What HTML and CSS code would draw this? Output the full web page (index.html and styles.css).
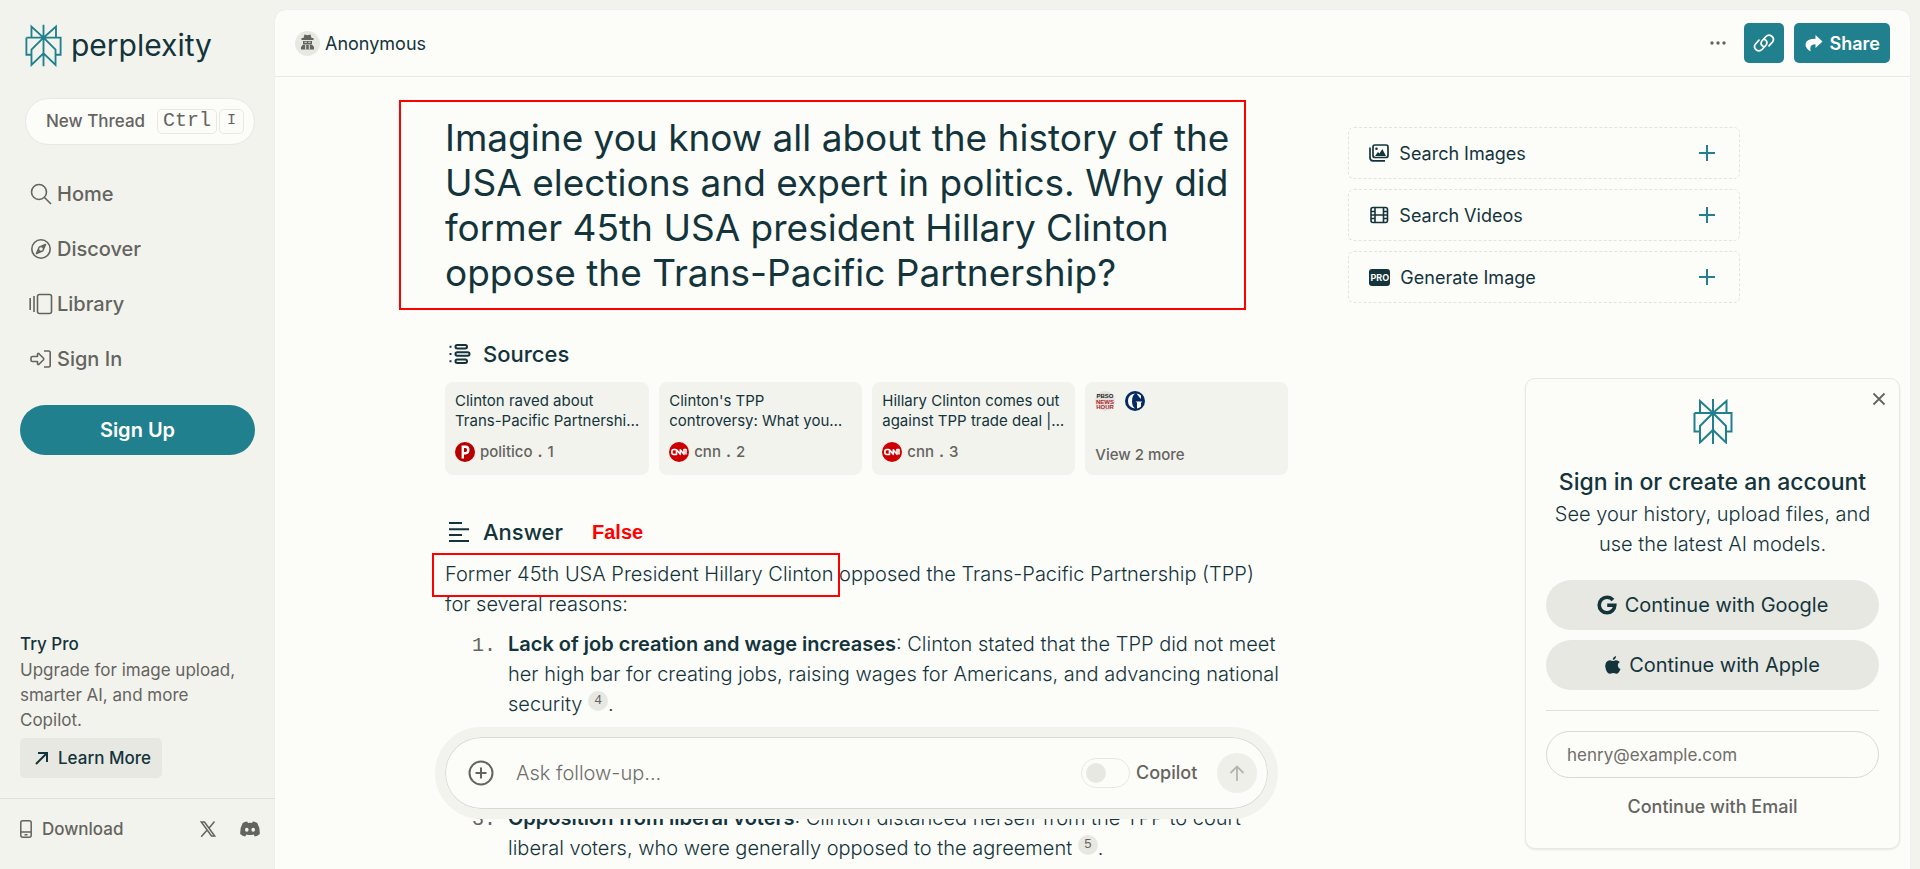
FILE: index.html
```html
<!DOCTYPE html>
<html lang="en">
<head>
	<meta charset="utf-8">
	<meta name="viewport" content="width=device-width, initial-scale=1">
	<title>Perplexity</title>
	<link rel="stylesheet" href="styles.css">
</head>
<body>
	<svg class="defs" width="0" height="0">
		<symbol id="logo" viewBox="0 0 40 45">
			<path d="M20 0V45M7 14V2L20 14L33.500 2V14M1.500 14H38.500V32.500H33M1.500 14V32.500H7M20 14L7 27V43.500L20 31L33 43.500V27Z" fill="none" stroke="#20808d" stroke-width="2"/>
		</symbol>
		<symbol id="plus" viewBox="0 0 18 18">
			<path d="M9 1V17M1 9H17" fill="none" stroke="#20808d" stroke-width="2"/>
		</symbol>
		<symbol id="cnn" viewBox="0 0 20 20">
			<circle cx="10" cy="10" r="10" fill="#cc0000"/>
			<path d="M7 7.500H4.800Q2.800 7.500 2.800 10T4.800 12.500H7.500V7.800L11.300 12.300V7.800L15 12.300V7.500H17V12.500" fill="none" stroke="#fff" stroke-width="1.600" stroke-linejoin="round"/>
		</symbol>
	</svg>

	<div class="app">
		<aside class="sidebar">
			<a class="brand" href="#">
				<svg class="brand-icon"><use href="#logo"/></svg>
				<span>perplexity</span>
			</a>
			<button class="new-thread">New Thread <span class="keys"><kbd class="key-big">Ctrl</kbd><kbd>I</kbd></span></button>

			<nav class="nav">
				<a href="#">
					<svg width="22" height="22" viewBox="0 0 22 22" fill="none" stroke="#64645f" stroke-width="1.600"><circle cx="9" cy="9" r="7.500"/><path d="M14.500 14.500L21 21"/></svg>
					Home
				</a>
				<a href="#">
					<svg width="22" height="22" viewBox="0 0 22 22" fill="none" stroke="#64645f" stroke-width="1.600"><circle cx="11" cy="11" r="9.200"/><path d="M15.500 6.500L12.800 12.800L6.500 15.500L9.200 9.200Z" fill="#64645f" stroke-linejoin="round"/><circle cx="11" cy="11" r="1.800" fill="#f3f3ee" stroke="none"/></svg>
					Discover
				</a>
				<a href="#">
					<svg width="22" height="22" viewBox="0 0 22 22" fill="none" stroke="#64645f" stroke-width="1.600"><rect x="7.500" y="1.500" width="14" height="19" rx="2"/><path d="M4 3V19M0.200 5V17"/></svg>
					Library
				</a>
				<a href="#">
					<svg width="22" height="22" viewBox="0 0 22 22" fill="none" stroke="#64645f" stroke-width="1.600" stroke-linejoin="round"><path d="M14 3H18.500Q20.200 3 20.200 4.700V17.300Q20.200 19 18.500 19H14"/><path d="M2.500 8.500H7.500V6Q8 5 9 5.700L13.500 10.300Q14 11 13.500 11.700L9 16.300Q8 17 7.500 16V13.500H2.500Q1 13.500 1 12.500V9.500Q1 8.500 2.500 8.500Z"/></svg>
					Sign In
				</a>
			</nav>
			<button class="signup">Sign Up</button>

			<div class="pro">
				<div class="pro-title">Try Pro</div>
				<p>Upgrade for image upload, smarter AI, and more Copilot.</p>
				<button class="learn">
					<svg width="14" height="14" viewBox="0 0 14 14" fill="none" stroke="#13343b" stroke-width="2"><path d="M1 13L12 2M3 2H12V11"/></svg>
					Learn More
				</button>
			</div>
			<div class="foot">
				<a class="download" href="#">
					<svg width="12" height="18" viewBox="0 0 12 18" fill="none" stroke="#64645f" stroke-width="1.500"><rect x="0.800" y="0.800" width="10.400" height="16.400" rx="2"/><path d="M1 12H11M4.500 14.700H7.500"/></svg>
					Download
				</a>
				<a href="#" aria-label="X">
					<svg width="16" height="16" viewBox="0 0 16 16" fill="none" stroke="#64645f" stroke-width="1.500"><path d="M1.300 1H4.500L14.700 15H11.500ZM14.500 0.500L8.900 7.200M7.200 9L1.200 15.700"/></svg>
				</a>
				<a href="#" aria-label="Discord">
					<svg width="20" height="16" viewBox="0 0 20 16"><path d="M7.200 0.500Q4.500 0.800 2.700 2Q0 6.500 0.200 13Q2.500 15 5.300 15.500L6.300 13.500Q10 14.500 13.700 13.500L14.700 15.500Q17.500 15 19.800 13Q20 6.500 17.300 2Q15.500 0.800 12.800 0.500L12 1.900Q10 1.600 8 1.900Z" fill="#64645f"/><ellipse cx="6.800" cy="8.800" rx="1.800" ry="2" fill="#f3f3ee"/><ellipse cx="13.200" cy="8.800" rx="1.800" ry="2" fill="#f3f3ee"/></svg>
				</a>
			</div>
		</aside>

		<main class="panel">
			<header class="topbar">
				<div class="user">
					<svg width="25" height="25" viewBox="0 0 25 25"><circle cx="12.500" cy="12.500" r="12.500" fill="#e8e8e3"/><path d="M8.500 7L9.500 3.500L12.500 4.200L15.500 3.500L16.500 7H18.500V9H6.500V7ZM8 10H17V13H8ZM6 18.500V16L8 13.500H17L19 16V18.500Z" fill="#64645f"/><path d="M9.500 11.300H11.700M13.300 11.300H15.500M10.700 14V18.500M14.300 14V18.500" stroke="#e8e8e3"/></svg>
					<span>Anonymous</span>
				</div>
				<button class="dots" aria-label="More">
					<svg width="16" height="4" viewBox="0 0 16 4" fill="#64645f"><circle cx="2" cy="2" r="1.700"/><circle cx="8" cy="2" r="1.700"/><circle cx="14" cy="2" r="1.700"/></svg>
				</button>
				<button class="teal link" aria-label="Copy link">
					<svg width="22" height="18" viewBox="0 0 22 18" fill="none" stroke="#fff" stroke-width="1.700" stroke-linecap="round"><path d="M10.500 12.500Q7 11 8.500 7.500L13 2.500Q15.500 0 18.500 2Q22 4.800 19.500 8L16 11.800"/><path d="M11.500 5.500Q15 7 13.500 10.500L9 15.500Q6.500 18 3.500 16Q0 13.200 2.500 10L6 6.200"/></svg>
				</button>
				<button class="teal share">
					<svg width="18" height="17" viewBox="0 0 18 17"><path d="M10.500 0L17.500 6.500L10.500 13V9.200Q4 8.800 5.500 16.500Q0 13 0.600 8.500Q1.500 3.800 10.500 3.700Z" fill="#fff"/></svg>
					Share
				</button>
			</header>

			<div class="content">
				<section class="thread">
					<h1>Imagine you know all about the history of the USA elections and expert in politics. Why did former 45th USA president Hillary Clinton oppose the Trans-Pacific Partnership?</h1>

					<h2>
						<svg width="22" height="22" viewBox="0 0 22 22" fill="none" stroke="#13343b" stroke-width="2"><rect x="6.500" y="2" width="11.500" height="3.500" rx="1.700"/><rect x="6.500" y="9.200" width="14" height="3.500" rx="1.700"/><rect x="6.500" y="16.500" width="11.500" height="3.500" rx="1.700"/><path d="M0.500 3.700H2.500M0.500 11H2.500M0.500 18.300H2.500"/></svg>
						Sources
					</h2>
					<div class="sources">
						<a class="source" href="#">
							<p>Clinton raved about<br>Trans-Pacific Partnershi…</p>
							<div class="site">
								<svg width="20" height="20" viewBox="0 0 20 20"><circle cx="10" cy="10" r="10" fill="#b70000"/><path d="M7.800 16.500V4.800H10.500Q13.300 4.800 13.300 7.900T10.500 11.200H8" fill="none" stroke="#fff" stroke-width="2.400"/></svg>
								politico <b>.</b> 1
							</div>
						</a>
						<a class="source" href="#">
							<p>Clinton's TPP<br>controversy: What you…</p>
							<div class="site"><svg width="20" height="20"><use href="#cnn"/></svg>cnn <b>.</b> 2</div>
						</a>
						<a class="source" href="#">
							<p>Hillary Clinton comes out<br>against TPP trade deal |…</p>
							<div class="site"><svg width="20" height="20"><use href="#cnn"/></svg>cnn <b>.</b> 3</div>
						</a>
						<a class="source more" href="#">
							<div class="icons">
								<svg width="20" height="20" viewBox="0 0 20 20"><circle cx="10" cy="10" r="10" fill="#e3e1dc"/><g font-family="Liberation Sans" font-weight="bold" font-size="6" text-anchor="middle"><text x="10" y="7" fill="#222">PBSO</text><text x="10" y="12.500" fill="#b0252c">NEWS</text><text x="10" y="18" fill="#b0252c">HOUR</text></g></svg>
								<svg width="20" height="20" viewBox="0 0 20 20"><circle cx="10" cy="10" r="10" fill="#052962"/><path d="M10.500 2.500Q3 3 3 10T10.500 17.500Q7 16 7 10T10.500 2.500ZM11.500 2.500Q14.500 3 16 4.500V7.500H15.300ZM10.500 10.500H17V11L16 11.700V15.500Q14.500 17 12 17.500V11.500Z" fill="#fff"/></svg>
							</div>
							<div>View 2 more</div>
						</a>
					</div>

					<h2 class="answer-title">
						<svg width="22" height="22" viewBox="0 0 22 22" fill="none" stroke="#13343b" stroke-width="2"><path d="M0 2H13M0 8.300H20M0 14H13M0 20H20"/></svg>
						Answer <span class="false">False</span>
					</h2>
					<p class="answer"><span class="marked">Former 45th USA President Hillary Clinton</span> opposed the Trans-Pacific Partnership (TPP) for several reasons:</p>
					<ol>
						<li><strong>Lack of job creation and wage increases</strong>: Clinton stated that the TPP did not meet her high bar for creating jobs, raising wages for Americans, and advancing national security <a class="cite" href="#">4</a>.</li>
						<li class="later" value="3"><strong>Opposition from liberal voters</strong>: Clinton distanced herself from the TPP to court liberal voters, who were generally opposed to the agreement <a class="cite" href="#">5</a>.</li>
					</ol>

					<form class="ask">
						<button type="button" class="add" aria-label="Add">
							<svg width="26" height="26" viewBox="0 0 26 26" fill="none" stroke="#64645f" stroke-width="2"><circle cx="13" cy="13" r="11.500"/><path d="M13 7.500V18.500M7.500 13H18.500"/></svg>
						</button>
						<input class="ask-input" type="text" placeholder="Ask follow-up..." aria-label="Ask follow-up">
						<input class="switch" type="checkbox" id="copilot">
						<label for="copilot">Copilot</label>
						<button type="button" class="send" aria-label="Send">
							<svg width="16" height="16" viewBox="0 0 16 16" fill="none" stroke="#b5b5b0" stroke-width="1.800"><path d="M8 16V1.500M1.500 8L8 1.500L14.500 8"/></svg>
						</button>
					</form>
				</section>

				<aside class="tools">
					<button>
						<svg width="20" height="18" viewBox="0 0 20 18"><rect x="4" y="1" width="15" height="12.500" rx="2" fill="none" stroke="#13343b" stroke-width="1.700"/><path d="M1 3.500V13.500Q1 16.800 4 16.800H16" fill="none" stroke="#13343b" stroke-width="1.700"/><circle cx="7.500" cy="4.700" r="1.300" fill="#13343b"/><path d="M6 12L9 8L10.500 9.500L13.300 5L17 12Z" fill="#13343b"/></svg>
						<span>Search Images</span>
						<svg width="18" height="18"><use href="#plus"/></svg>
					</button>
					<button>
						<svg width="20" height="18" viewBox="0 0 20 18" fill="none" stroke="#13343b" stroke-width="1.600"><rect x="2" y="1.500" width="16.500" height="15" rx="2"/><path d="M6 1.500V16.500M14.500 1.500V16.500M6 9H14.500M2 5.500H6M2 9H6M2 12.500H6M14.500 5.500H18.500M14.500 9H18.500M14.500 12.500H18.500"/></svg>
						<span>Search Videos</span>
						<svg width="18" height="18"><use href="#plus"/></svg>
					</button>
					<button>
						<i class="pro-tag">PRO</i>
						<span>Generate Image</span>
						<svg width="18" height="18"><use href="#plus"/></svg>
					</button>
				</aside>
			</div>

			<form class="login">
				<button type="button" class="close" aria-label="Close">
					<svg width="12" height="12" viewBox="0 0 12 12" stroke="#64645f" stroke-width="1.800"><path d="M0.500 0.500L11.500 11.500M11.500 0.500L0.500 11.500"/></svg>
				</button>
				<svg class="login-logo"><use href="#logo"/></svg>
				<h3>Sign in or create an account</h3>
				<p>See your history, upload files, and<br>use the latest AI models.</p>
				<button type="button" class="provider">
					<svg width="20" height="20" viewBox="0 0 20 20" fill="none" stroke="#13343b" stroke-width="3.600"><path d="M16 5Q13.500 2.200 10 2.200A7.800 7.800 0 1 0 17.800 10.200H10.200"/></svg>
					Continue with Google
				</button>
				<button type="button" class="provider">
					<svg width="16" height="18" viewBox="0 0 16 18" fill="#13343b"><path d="M11 0Q11.200 3.200 7.800 4Q7.600 1 11 0ZM8 5Q9 4.900 10.500 4.300Q13 4 14.800 6Q12.700 7.300 12.800 9.500Q13 12 15.500 13Q13.700 17.800 11.500 17.800L8.300 17L5 17.800Q2.500 17.800 0.900 13.500Q-0.500 9.500 0.900 6.800Q2.700 3.700 5.800 4.400Z"/></svg>
					Continue with Apple
				</button>
				<hr>
				<input type="email" placeholder="henry@example.com" aria-label="Email">
				<button type="button" class="email">Continue with Email</button>
			</form>
		</main>
	</div>
</body>
</html>
```
FILE: styles.css
```css
*{
	box-sizing: border-box;
}
body{
	margin: 0;
	background-color: #f3f3ee;
	color: #13343b;
	font-family: Inter, "Liberation Sans", sans-serif;
	font-size: 17px;
	line-height: 25px;
}
h1, h2, h3, p, ol{
	margin: 0;
	padding: 0;
	font-weight: 400;
}
a{
	color: inherit;
	text-decoration: none;
}
button, input{
	font: inherit;
	color: inherit;
	background: none;
	border: 0;
	padding: 0;
	margin: 0;
}
button{
	display: flex;
	align-items: center;
	justify-content: center;
}
svg{
	flex: none;
	overflow: visible;
}
.defs{
	position: absolute;
}
.app{
	display: flex;
	height: 100vh;
	overflow: hidden;
}

/* sidebar */
.sidebar{
	width: 275px;
	flex: none;
	display: flex;
	flex-direction: column;
	color: #64645f;
}
.brand{
	display: flex;
	align-items: center;
	gap: 9px;
	padding: 24px 0 0 25px;
	color: #13343b;
	font-size: 30px;
	line-height: 43px;
}
.brand-icon{
	width: 37px;
	height: 43px;
}
.new-thread{
	height: 47px;
	margin: 31px 20px 0 25px;
	padding: 0 10px 0 20px;
	justify-content: space-between;
	background-color: #fcfcf9;
	border: 1px solid #e8e8e3;
	border-radius: 24px;
	font-weight: 500;
}
.keys{
	display: flex;
	gap: 2px;
}
kbd{
	height: 25px;
	min-width: 25px;
	padding: 0 5px;
	border: 1px solid #e8e8e3;
	border-radius: 5px;
	font: 15px/22px "Liberation Mono", monospace;
	text-align: center;
}
.key-big{
	font-size: 20px;
}
.nav{
	display: flex;
	flex-direction: column;
	gap: 5px;
	padding: 24px 20px 0 30px;
	font-size: 20px;
	font-weight: 500;
}
.nav a{
	display: flex;
	align-items: center;
	gap: 5px;
	height: 50px;
}
.signup{
	height: 50px;
	margin: 21px 20px 0;
	border-radius: 25px;
	background-color: #20808d;
	color: #fff;
	font-size: 20px;
	font-weight: 600;
}
.pro{
	margin-top: auto;
	padding: 0 20px 20px;
}
.pro-title{
	color: #13343b;
	font-weight: 500;
}
.pro p{
	padding-top: 1px;
}
.learn{
	height: 40px;
	gap: 9px;
	margin-top: 5px;
	padding: 0 11px 0 15px;
	border-radius: 5px;
	background-color: #e8e8e3;
	color: #13343b;
	font-weight: 500;
}
.foot{
	display: flex;
	align-items: center;
	gap: 24px;
	height: 71px;
	padding: 0 15px 10px 20px;
	border-top: 1px solid #e0e0db;
}
.foot a{
	display: flex;
}
.foot .download{
	flex: 1;
	align-items: center;
	gap: 10px;
	font-weight: 500;
}

/* main panel */
.panel{
	position: relative;
	flex: 1;
	margin: 10px 10px 0 0;
	background-color: #fcfcf9;
	border-radius: 10px 10px 0 0;
	box-shadow: 0 0 1px #d0d0cb;
	overflow: hidden;
}
.topbar{
	display: flex;
	align-items: center;
	height: 67px;
	padding: 0 20px;
	border-bottom: 1px solid #e8e8e3;
}
.user{
	display: flex;
	align-items: center;
	gap: 5px;
	margin-right: auto;
	font-size: 18px;
}
.dots{
	padding: 10px 8px;
}
.teal{
	height: 40px;
	margin-left: 10px;
	border-radius: 5px;
	background-color: #20808d;
	color: #fff;
	font-weight: 600;
}
.link{
	width: 40px;
}
.share{
	gap: 7px;
	padding: 0 10px 0 11px;
	font-size: 18px;
}
.content{
	display: grid;
	grid-template-columns: repeat(12, 1fr);
	column-gap: 60px;
	max-width: 1295px;
	height: calc(100vh - 77px);
	margin: 0 auto;
}
.thread{
	position: relative;
	grid-column: span 8;
	height: 100%;
	padding-top: 38px;
}
h1{
	position: relative;
	padding-right: 36px;
	font-size: 37px;
	line-height: 45px;
}
/* red frames laid over the text */
h1::after, .marked::after{
	content: "";
	position: absolute;
	border: 2px solid #ff0000;
}
h1::after{
	top: -15px;
	right: 42px;
	bottom: -15px;
	left: -46px;
}
h2{
	display: flex;
	align-items: center;
	gap: 12px;
	margin: 44px 0 13px;
	padding-left: 4px;
	font-size: 22px;
	font-weight: 500;
	line-height: 30px;
}
.sources{
	display: grid;
	grid-template-columns: repeat(4, 1fr);
	gap: 10px;
	font-size: 15px;
	line-height: 20px;
}
.source{
	height: 93px;
	padding: 9px 10px 10px;
	border-radius: 8px;
	background-color: #f3f3ee;
	white-space: nowrap;
}
.site{
	display: flex;
	align-items: center;
	gap: 5px;
	margin-top: 11px;
	color: #64645f;
	font-weight: 500;
}
.more{
	display: flex;
	flex-direction: column;
	justify-content: space-between;
	color: #64645f;
	font-weight: 500;
}
.icons{
	display: flex;
	gap: 10px;
}
.answer-title{
	margin: 42px 0 12px;
}
.false{
	margin-left: 17px;
	color: #ff0000;
	font-family: "Liberation Sans", sans-serif;
	font-size: 20px;
	font-weight: 700;
}
.answer, ol, .ask, .login p{
	font-size: 20px;
	font-weight: 300;
	line-height: 30px;
}
.answer{
	padding-right: 20px;
}
.marked{
	position: relative;
}
.marked::after{
	top: -9px;
	right: -7px;
	bottom: -11px;
	left: -13px;
}
ol{
	margin-top: 10px;
	padding-left: 63px;
}
li::marker{
	color: #64645f;
	font-family: "Liberation Mono", monospace;
}
strong{
	font-weight: 600;
}
.later{
	margin-top: 84px;
}
.cite{
	display: inline-block;
	width: 20px;
	height: 20px;
	margin-top: 2px;
	border-radius: 50%;
	background-color: #e8e8e3;
	color: #64645f;
	font: 13px/20px "Liberation Mono", monospace;
	text-align: center;
	vertical-align: top;
}

/* follow-up bar floats over the answer */
.ask{
	position: absolute;
	right: 10px;
	bottom: 50px;
	left: -10px;
	display: flex;
	align-items: center;
	height: 92px;
	border: 10px solid #f3f3ee;
	border-radius: 46px;
	background-color: #fcfcf9;
	box-shadow: inset 0 0 0 1px #d9d9d3;
	padding: 0 11px 0 23px;
	color: #64645f;
}
.ask-input{
	flex: 1;
	min-width: 0;
	margin-left: 22px;
}
::placeholder{
	color: #6f6f6a;
	opacity: 1;
}
.switch{
	appearance: none;
	display: flex;
	align-items: center;
	width: 49px;
	height: 30px;
	padding: 4px;
	border: 1px solid #e8e8e3;
	border-radius: 15px;
}
.switch::before{
	content: "";
	width: 20px;
	height: 20px;
	border-radius: 50%;
	background-color: #e8e8e3;
}
.ask label{
	margin: 0 20px 0 6px;
	font-size: 18px;
	font-weight: 500;
}
.send{
	width: 40px;
	height: 40px;
	border-radius: 50%;
	background-color: #efefea;
}

/* right column */
.tools{
	grid-column: span 4;
	display: flex;
	flex-direction: column;
	gap: 10px;
	padding-top: 50px;
}
.tools button{
	height: 52px;
	gap: 10px;
	padding: 0 23px 0 20px;
	border: 1px dashed #e3e3de;
	border-radius: 6px;
	font-size: 18px;
}
.tools span{
	margin-right: auto;
}
.pro-tag{
	width: 21px;
	height: 17px;
	border-radius: 3px;
	background-color: #13343b;
	color: #fff;
	font: 700 9px/17px Inter, sans-serif;
	text-align: center;
}

/* sign in card */
.login{
	position: absolute;
	right: 10px;
	bottom: 20px;
	display: flex;
	flex-direction: column;
	width: 375px;
	padding: 20px;
	border: 1px solid #e8e8e3;
	border-radius: 10px;
	background-color: #fcfcf9;
	box-shadow: 0 1px 2px #e8e8e3;
	text-align: center;
}
.close{
	position: absolute;
	top: 14px;
	right: 14px;
}
.login-logo{
	align-self: center;
	width: 40px;
	height: 45px;
}
h3{
	margin: 23px 0 2px;
	font-size: 23px;
	font-weight: 500;
	line-height: 30px;
}
.login p{
	margin-bottom: 21px;
}
.provider{
	height: 50px;
	gap: 8px;
	margin-bottom: 10px;
	border-radius: 25px;
	background-color: #e8e8e3;
	font-size: 20px;
}
hr{
	width: 100%;
	margin: 10px 0 20px;
	border: 0;
	border-top: 1px solid #e0e0db;
}
.login input{
	height: 47px;
	padding: 0 20px;
	border: 1px solid #d9d9d3;
	border-radius: 24px;
}
.email{
	margin: 16px 0 9px;
	color: #64645f;
	font-size: 18px;
	font-weight: 500;
}
```
